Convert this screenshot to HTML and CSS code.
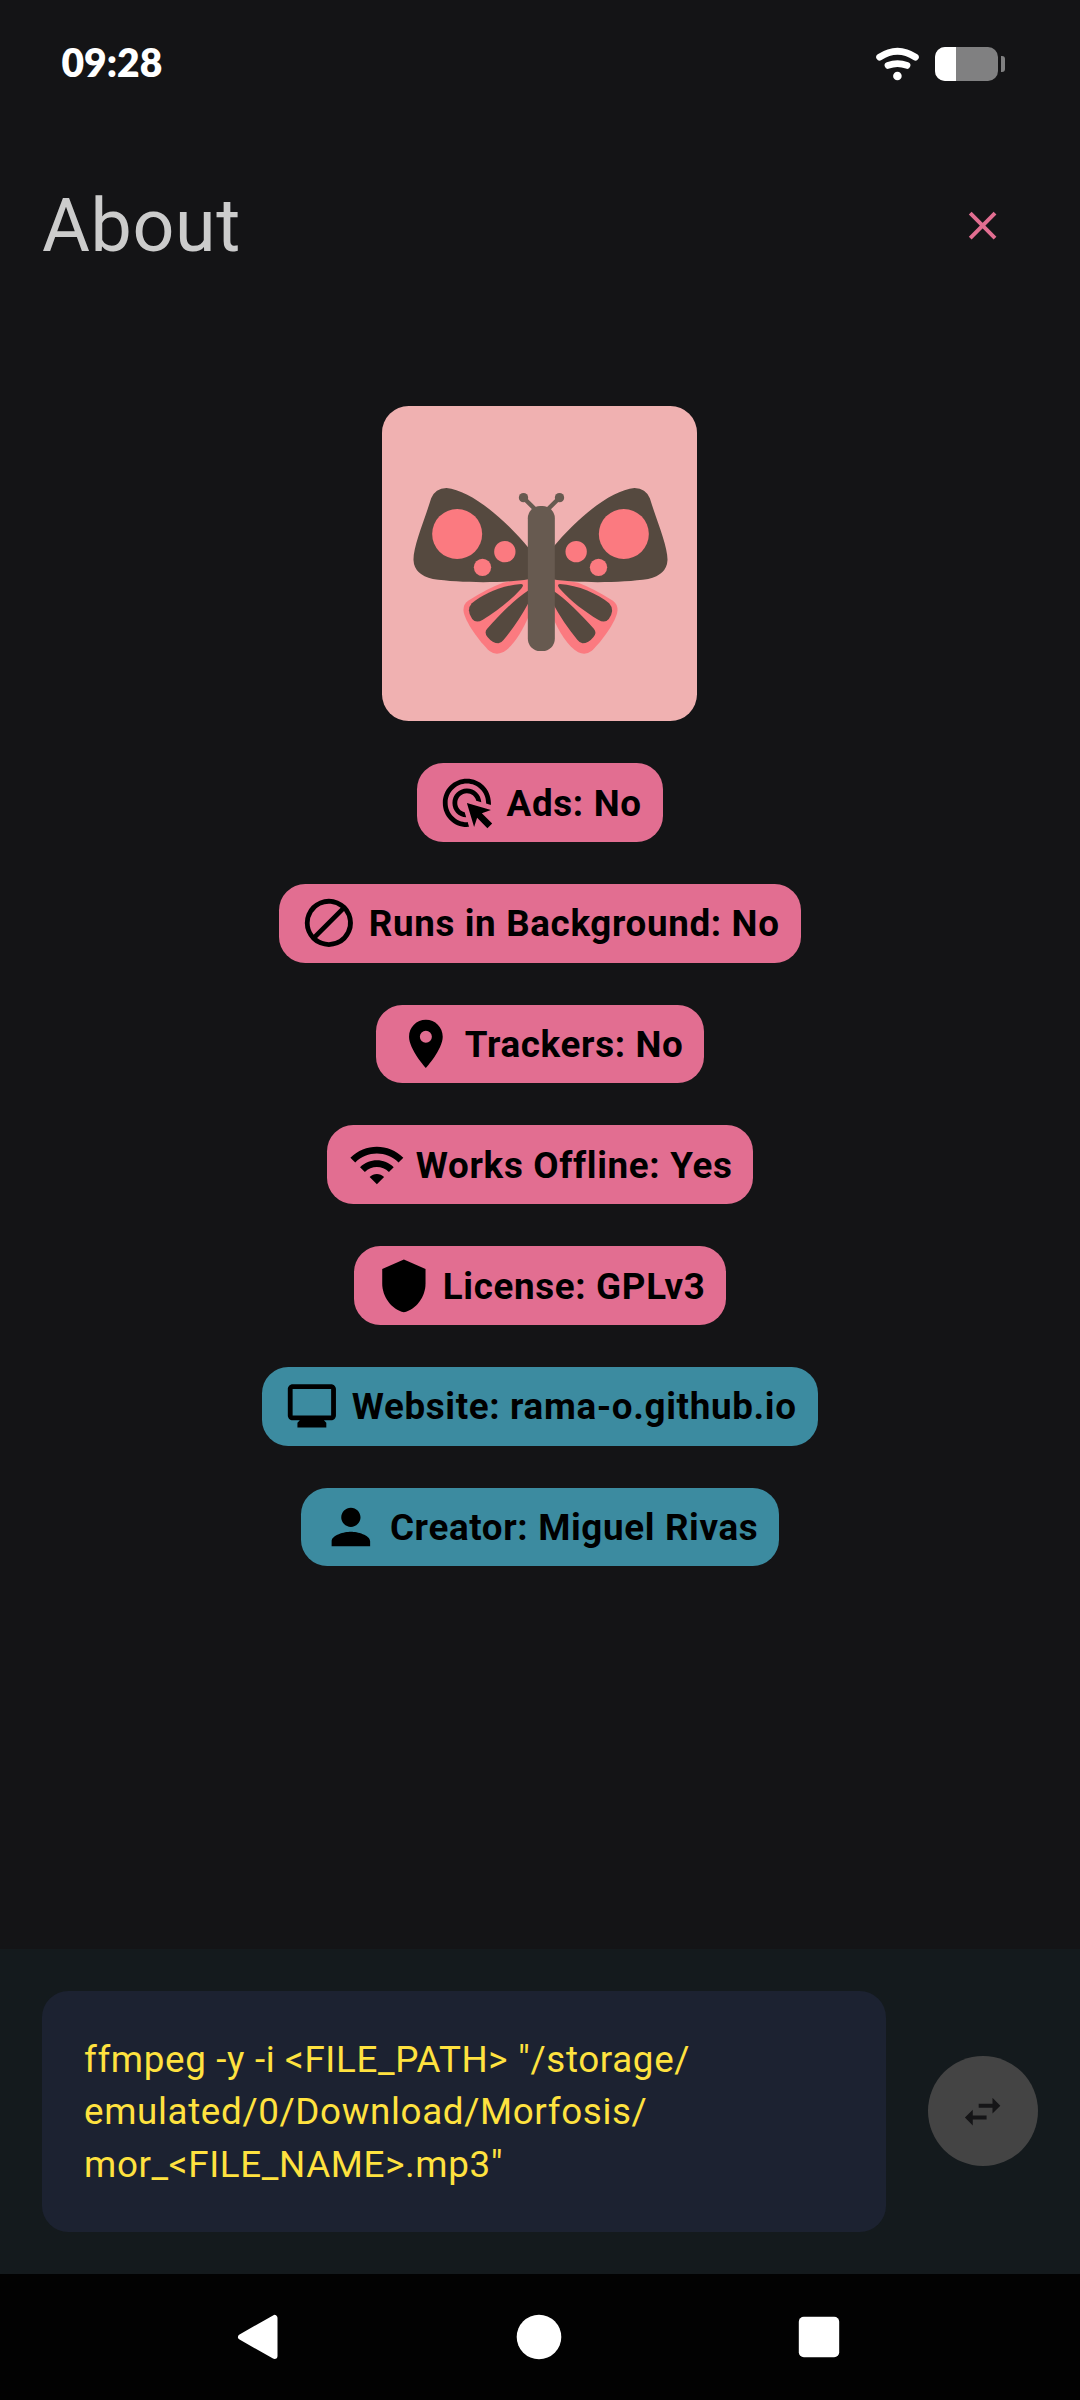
FILE: index.html
```html
<!DOCTYPE html>
<html lang="en">
<head>
<meta charset="utf-8">
<title>About</title>
<link rel="stylesheet" href="styles.css">
</head>
<body>
<div class="screen">
  <div class="status-bar">
    <span class="clock">09:28</span>
    <svg class="status-icons" viewBox="0 0 130 34" width="130" height="34">
      <g fill="none" stroke="#fff" stroke-width="6.8" stroke-linecap="round">
        <path d="M3.6 10.2Q21.5 -1.7 39.4 10.2"/>
        <path d="M12 18.4Q21.5 14.8 31 18.4"/>
      </g>
      <circle cx="21.4" cy="29" r="4.3" fill="#fff"/>
      <rect x="59" y="0" width="63" height="34" rx="10" fill="#808081"/>
      <path d="M80 0H69a10 10 0 0 0-10 10v14a10 10 0 0 0 10 10h11z" fill="#fff"/>
      <path d="M125 9h1a3 3 0 0 1 3 3v10a3 3 0 0 1-3 3h-1z" fill="#808081"/>
    </svg>
  </div>
  <header class="header">
    <h1 class="title">About</h1>
    <svg class="close" viewBox="0 0 24 24"><path d="M18.3 5.7L5.7 18.3M5.7 5.7l12.6 12.6"/></svg>
  </header>
  <main class="about">
    <svg class="logo" viewBox="0 0 945 945">
      <rect width="945" height="945" rx="80" fill="#f0b1b1"/>
      <g transform="translate(-37.5 -48)">
        <g id="wing">
          <path d="M478 568Q435 570 400 578Q350 597 296 632Q281 642 282 662C286 695 330 755 360 783Q378 797 400 787C430 770 458 725 478 678Z" fill="#fb7a80"/>
          <path d="M478 475C400 380 300 300 231 294Q197 295 185 325C165 390 131 470 132 510Q134 554 190 567C270 579 400 580 478 568Z" fill="#55493f"/>
          <circle cx="263" cy="432" r="75" fill="#fb7a80"/>
          <circle cx="406" cy="485" r="32" fill="#fb7a80"/>
          <circle cx="339" cy="532" r="26" fill="#fb7a80"/>
          <path d="M455 582C400 585 340 612 307 640Q289 660 308 687Q320 701 340 689C380 665 420 635 455 596Q466 583 455 582Z" fill="#55493f"/>
          <path d="M478 600C435 628 390 675 353 716Q343 727 354 741Q369 760 387 760Q395 759 402 750C430 716 455 680 478 637Z" fill="#55493f"/>
        </g>
        <use href="#wing" transform="translate(1026 0) scale(-1 1)"/>
        <g fill="#675a50" stroke="#675a50">
          <path d="M462 323L500 361M570 323L532 361" stroke-width="13"/>
          <circle cx="462" cy="323" r="14" stroke="none"/>
          <circle cx="570" cy="323" r="14" stroke="none"/>
          <rect x="475" y="348" width="81" height="435" rx="37" stroke="none"/>
        </g>
      </g>
    </svg>
    <div class="chip">
      <svg class="icon" viewBox="0 0 24 24"><path d="M11.71 17.99C8.53 17.84 6 15.22 6 12c0-3.31 2.69-6 6-6 3.22 0 5.84 2.53 5.99 5.71l-2.1-.63C15.48 9.31 13.89 8 12 8c-2.21 0-4 1.79-4 4 0 1.89 1.31 3.48 3.08 3.89l.63 2.1zM22 12c0 .3-.01.6-.04.9l-1.97-.59c.01-.1.01-.21.01-.31 0-4.42-3.58-8-8-8s-8 3.58-8 8 3.58 8 8 8c.1 0 .21 0 .31-.01l.59 1.97c-.3.03-.6.04-.9.04-5.52 0-10-4.48-10-10S6.48 2 12 2s10 4.48 10 10zm-3.77 4.26L22 15l-10-3 3 10 1.26-3.77 4.27 4.27 1.98-1.98-4.28-4.26z"/></svg>
      <span class="label">Ads: No</span>
    </div>
    <div class="chip">
      <svg class="icon" viewBox="0 0 24 24"><path d="M12 2a10 10 0 1 0 0 20 10 10 0 0 0 0-20zM4 12a8 8 0 0 1 12.9-6.31L5.69 16.9A7.9 7.9 0 0 1 4 12zm8 8a7.9 7.9 0 0 1-4.9-1.69L18.31 7.1A8 8 0 0 1 12 20z"/></svg>
      <span class="label">Runs in Background: No</span>
    </div>
    <div class="chip">
      <svg class="icon" viewBox="0 0 24 24"><path d="M12 2C8.13 2 5 5.13 5 9c0 5.25 7 13 7 13s7-7.75 7-13c0-3.87-3.13-7-7-7zm0 9.5a2.5 2.5 0 0 1 0-5 2.5 2.5 0 0 1 0 5z"/></svg>
      <span class="label">Trackers: No</span>
    </div>
    <div class="chip">
      <svg class="icon" viewBox="0 0 24 24"><path d="M1 9l2 2c4.97-4.97 13.03-4.97 18 0l2-2C16.93 2.93 7.08 2.93 1 9zm8 8l3 3 3-3c-1.65-1.66-4.34-1.66-6 0zm-4-4l2 2c2.76-2.76 7.24-2.76 10 0l2-2C15.14 9.14 8.87 9.14 5 13z"/></svg>
      <span class="label">Works Offline: Yes</span>
    </div>
    <div class="chip">
      <svg class="icon" viewBox="0 0 24 24"><path d="M12 1L3 5v6c0 5.55 3.84 10.74 9 12 5.16-1.26 9-6.45 9-12V5l-9-4z"/></svg>
      <span class="label">License: GPLv3</span>
    </div>
    <div class="chip link">
      <svg class="icon" viewBox="0 0 24 24"><path d="M20 3H4c-1.1 0-2 .9-2 2v11c0 1.1.9 2 2 2h3l-1 1v2h12v-2l-1-1h3c1.1 0 2-.9 2-2V5c0-1.1-.9-2-2-2zm0 13H4V5h16v11z"/></svg>
      <span class="label">Website: rama-o.github.io</span>
    </div>
    <div class="chip link">
      <svg class="icon" viewBox="0 0 24 24"><path d="M12 12c2.21 0 4-1.79 4-4s-1.79-4-4-4-4 1.79-4 4 1.79 4 4 4zm0 2c-2.67 0-8 1.34-8 4v2h16v-2c0-2.66-5.33-4-8-4z"/></svg>
      <span class="label">Creator: Miguel Rivas</span>
    </div>
  </main>
  <footer class="command-bar">
    <div class="command">ffmpeg -y -i &lt;FILE_PATH&gt; "/storage/<br>emulated/0/Download/Morfosis/<br>mor_&lt;FILE_NAME&gt;.mp3"</div>
    <div class="convert">
      <svg class="swap" viewBox="0 0 24 24"><path d="M6.99 11L3 15l3.99 4v-3H14v-2H6.99v-3zM21 9l-3.99-4v3H10v2h7.01v3L21 9z"/></svg>
    </div>
  </footer>
  <nav class="nav-bar">
    <svg viewBox="0 0 46 46"><path d="M38.5 4V42L5 23Z" stroke="#fff" stroke-width="6" stroke-linejoin="round"/></svg>
    <svg viewBox="0 0 46 46"><circle cx="23" cy="23" r="22.3"/></svg>
    <svg viewBox="0 0 46 46"><rect x="2.8" y="2.8" width="40.4" height="40.4" rx="5"/></svg>
  </nav>
</div>
</body>
</html>
```
FILE: styles.css
```css
* { box-sizing: border-box; }

body {
  margin: 0;
  background: #141416;
  font-family: Roboto, "Liberation Sans", sans-serif;
}

.screen {
  width: 1080px;
  height: 2400px;
  display: flex;
  flex-direction: column;
  background: #141416;
}

.status-bar {
  height: 127px;
  padding: 0 74px 0 61.5px;
  display: flex;
  align-items: center;
  justify-content: space-between;
}

.clock {
  padding-bottom: 3px;
  color: #fff;
  font: 800 39px/46px Lato, sans-serif;
}

.status-icons { display: block; }

.header {
  height: 199px;
  padding: 0 73.5px 2px 42px;
  display: flex;
  align-items: center;
  justify-content: space-between;
}

.title {
  margin: 0;
  color: #ccc;
  font-size: 73.5px;
  font-weight: 400;
  line-height: 84px;
  letter-spacing: 0.65px;
}

.close {
  width: 47.25px;
  height: 47.25px;
  fill: none;
  stroke: #e26e91;
  stroke-width: 2;
}

.about {
  flex: 1;
  padding-top: 80px;
  display: flex;
  flex-direction: column;
  align-items: center;
  gap: 42px;
}

.logo {
  width: 315px;
  height: 315px;
  flex: none;
  margin-right: 1px;
}

.chip {
  height: 78.75px;
  flex: none;
  padding: 0 21px;
  display: flex;
  align-items: center;
  gap: 10.5px;
  border-radius: 26.25px;
  background: #e26e91;
  color: #000;
  font-size: 36.75px;
  font-weight: 700;
  line-height: 52.5px;
  letter-spacing: 0.656px;
  white-space: nowrap;
}

.chip.link { background: #3c8ba0; }

.label { padding-top: 3px; }

.icon {
  width: 57.75px;
  height: 57.75px;
}

.command-bar {
  height: 325.5px;
  padding: 42px;
  display: flex;
  align-items: center;
  gap: 42px;
  background: #141a1d;
}

.command {
  flex: 1;
  padding: 43px 42px 41px;
  border-radius: 26.25px;
  background: #1c2231;
  color: #ffe23f;
  font-size: 36.75px;
  line-height: 52.5px;
  letter-spacing: 0.656px;
  white-space: nowrap;
}

.convert {
  width: 110.25px;
  height: 110.25px;
  border-radius: 50%;
  background: #444;
  display: flex;
  align-items: center;
  justify-content: center;
}

.swap {
  width: 47.25px;
  height: 47.25px;
  fill: #151517;
}

.nav-bar {
  height: 126px;
  padding: 0 238px 0 236px;
  display: flex;
  align-items: center;
  justify-content: space-between;
  background: #020202;
}

.nav-bar svg {
  width: 46px;
  height: 46px;
  fill: #fff;
}
```
